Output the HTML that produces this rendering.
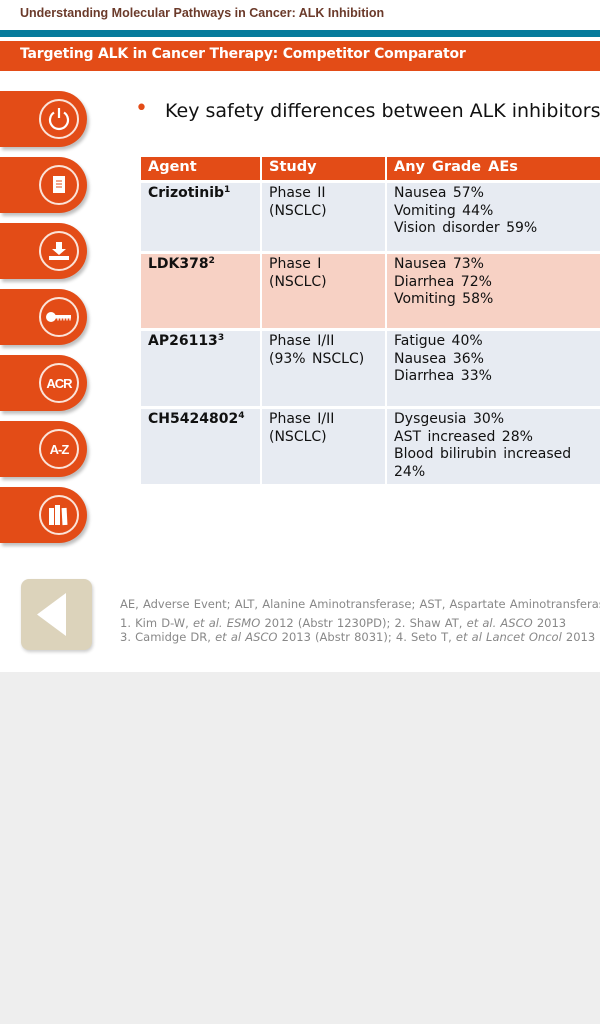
<!DOCTYPE html>
<html><head><meta charset="utf-8"><style>
*{margin:0;padding:0;box-sizing:border-box}
body{width:600px;height:1024px;background:#eeeeee;position:relative;overflow:hidden;font-family:"DejaVu Sans","Liberation Sans",sans-serif}
#main{position:absolute;left:0;top:0;width:600px;height:672px;background:#fff}
.h1{position:absolute;left:20px;top:6px;font:bold 12.5px "Liberation Sans",sans-serif;color:#6b3a2a}
.teal{position:absolute;left:0;top:30px;width:600px;height:7px;background:#057b9c}
.or{position:absolute;left:0;top:41px;width:600px;height:30px;background:#e34c17;color:#fff;font:bold 14px "DejaVu Sans",sans-serif;padding:5px 0 0 20px;letter-spacing:-0.2px}
.tab{position:absolute;left:0;width:87px;height:56px;background:#e34c17;border-radius:0 28px 28px 0;box-shadow:2px 3px 3px rgba(0,0,0,.25)}
.tab .c{position:absolute;left:39px;top:8px;width:40px;height:40px;border:2px solid #fbe3d8;border-radius:50%;color:#fff;display:flex;align-items:center;justify-content:center;font:bold 13px "Liberation Sans",sans-serif;letter-spacing:-1px}
.bul{position:absolute;left:136px;top:100px;font-size:19px;color:#111}
.bul span{color:#e34c17;font-size:22px;position:absolute;left:-1px;top:-4px}
.tbl{position:absolute;left:141px;top:157px;width:490px}
.row{position:relative;display:flex;margin-bottom:3px}
.row div{flex-shrink:0;padding:2px 7px;line-height:17.5px;font-size:14px;word-spacing:2px;color:#111;margin-right:2px}
.row div:nth-child(1){width:119px}
.row div:nth-child(2){width:123px}
.row div:nth-child(3){width:240px;margin-right:0}
.hd div{background:#e34c17;color:#fff;font-weight:bold;height:23px;padding-top:2px;font-size:14.5px}
.b div{background:#e7ebf2}.p div{background:#f7d1c4}
.row div.a{font-weight:bold;word-spacing:0}
sup{font-size:9px;vertical-align:5px;line-height:0}
.foot{position:absolute;left:120px;font-size:11.5px;color:#888;white-space:nowrap;word-spacing:0.5px}
.back{position:absolute;left:21px;top:579px;width:71px;height:71px;background:#dcd3bb;border-radius:8px;box-shadow:1px 2px 3px rgba(0,0,0,.2)}
</style></head><body>
<div id="main">
<div class="h1">Understanding Molecular Pathways in Cancer: ALK Inhibition</div>
<div class="teal"></div>
<div class="or">Targeting ALK in Cancer Therapy: Competitor Comparator</div>

<div class="tab" style="top:91px"><div class="c"><svg width="26" height="26" viewBox="0 0 26 26"><path d="M8 6.5A9 9 0 1 0 18 6.5" fill="none" stroke="#fff" stroke-width="2.2"/><path d="M13 2v10" stroke="#fff" stroke-width="2.2"/></svg></div></div>
<div class="tab" style="top:157px"><div class="c"><svg width="16" height="20" viewBox="0 0 16 20"><rect x="2" y="1" width="12" height="17" fill="#fff"/><path d="M5 6h6M5 9h6M5 12h6" stroke="#e34c17"/></svg></div></div>
<div class="tab" style="top:223px"><div class="c"><svg width="24" height="22" viewBox="0 0 24 22"><path d="M9 2h6v7h4l-7 6-7-6h4z" fill="#fff"/><rect x="2" y="16" width="20" height="4" fill="#fff"/></svg></div></div>
<div class="tab" style="top:289px"><div class="c"><svg width="28" height="16" viewBox="0 0 28 16"><circle cx="6" cy="8" r="5" fill="#fff"/><rect x="9" y="6" width="17" height="3.5" fill="#fff"/><path d="M13 9.5v2M16 9.5v2M19 9.5v2M22 9.5v2M25 9.5v2" stroke="#fff" stroke-width="1.3"/></svg></div></div>
<div class="tab" style="top:355px"><div class="c">ACR</div></div>
<div class="tab" style="top:421px"><div class="c">A-Z</div></div>
<div class="tab" style="top:487px"><div class="c"><svg width="22" height="22" viewBox="0 0 22 22"><rect x="1" y="4" width="5" height="17" fill="#fff"/><rect x="7" y="1" width="5" height="20" fill="#fff"/><rect x="14" y="4" width="5" height="17" fill="#fff" transform="rotate(-3 16 12)"/></svg></div></div>

<div class="bul"><span>•</span><div style="margin-left:29px;white-space:nowrap">Key safety differences between ALK inhibitors</div></div>

<div class="tbl">
<div class="row hd"><div>Agent</div><div>Study</div><div>Any Grade AEs</div></div>
<div class="row b" style="height:68px"><div class="a">Crizotinib<sup>1</sup></div><div>Phase II<br>(NSCLC)</div><div>Nausea 57%<br>Vomiting 44%<br>Vision disorder 59%</div></div>
<div class="row p" style="height:74px"><div class="a">LDK378<sup>2</sup></div><div>Phase I<br>(NSCLC)</div><div>Nausea 73%<br>Diarrhea 72%<br>Vomiting 58%</div></div>
<div class="row b" style="height:75px"><div class="a">AP26113<sup>3</sup></div><div>Phase I/II<br>(93% NSCLC)</div><div>Fatigue 40%<br>Nausea 36%<br>Diarrhea 33%</div></div>
<div class="row b" style="height:75px"><div class="a">CH5424802<sup>4</sup></div><div>Phase I/II<br>(NSCLC)</div><div>Dysgeusia 30%<br>AST increased 28%<br>Blood bilirubin increased<br>24%</div></div>
</div>

<div class="back"><svg width="71" height="71" viewBox="0 0 71 71"><path d="M45 14v43L16 35.5z" fill="#fff"/></svg></div>
<div class="foot" style="top:597px">AE, Adverse Event; ALT, Alanine Aminotransferase; AST, Aspartate Aminotransferase</div>
<div class="foot" style="top:616px">1. Kim D-W, <i>et al. ESMO</i> 2012 (Abstr 1230PD); 2. Shaw AT, <i>et al. ASCO</i> 2013</div>
<div class="foot" style="top:630px">3. Camidge DR, <i>et al ASCO</i> 2013 (Abstr 8031); 4. Seto T, <i>et al Lancet Oncol</i> 2013</div>
</div>
</body></html>
